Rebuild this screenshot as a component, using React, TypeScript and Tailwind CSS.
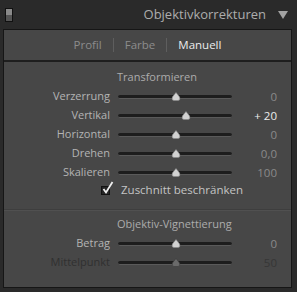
import React from "react";

const font = { fontFamily: '"Open Sans", "Noto Sans", sans-serif' };

type Row = { label: string; value: string; pos: number; bright?: boolean; dim?: boolean };

const transform: Row[] = [
  { label: "Verzerrung", value: "0", pos: 58 },
  { label: "Vertikal", value: "+ 20", pos: 68, bright: true },
  { label: "Horizontal", value: "0", pos: 58 },
  { label: "Drehen", value: "0,0", pos: 58 },
  { label: "Skalieren", value: "100", pos: 58 },
];

const vignette: Row[] = [
  { label: "Betrag", value: "0", pos: 58 },
  { label: "Mittelpunkt", value: "50", pos: 58, dim: true },
];

function Slider({ pos, dim }: { pos: number; dim?: boolean }) {
  return (
    <div className="relative w-[114px] h-[12px] flex items-center">
      <div className="w-full h-[4px] rounded-full bg-[#1d1d1d] border-b border-[#5a5a5a]" />
      <svg
        className="absolute top-[1px]"
        style={{ left: pos - 5 }}
        width="10"
        height="9"
        viewBox="0 0 10 9"
      >
        <path
          d="M5 0.5 L8.6 5 Q9.6 8.5 7 8.5 L3 8.5 Q0.4 8.5 1.4 5 Z"
          fill={dim ? "#6a6a6a" : "#d2d2d2"}
          stroke={dim ? "#3a3a3a" : "#8a8a8a"}
          strokeWidth="0.6"
        />
      </svg>
    </div>
  );
}

function SliderRow({ r }: { r: Row }) {
  const labelColor = r.dim ? "text-[#303030]" : "text-[#b4b4b4]";
  const valueColor = r.bright ? "text-[#ececec]" : r.dim ? "text-[#363636]" : "text-[#8a8a8a]";
  return (
    <div className="flex items-center h-[19px]">
      <div className={`w-[106px] text-right text-[11px] ${labelColor}`}>{r.label}</div>
      <div className="ml-[8px]">
        <Slider pos={r.pos} dim={r.dim} />
      </div>
      <div className={`w-[45px] text-right text-[11.5px] ${valueColor}`}>{r.value}</div>
    </div>
  );
}

export default function App() {
  return (
    <div className="w-[297px] h-[292px] bg-[#2a2a2a] overflow-hidden" style={font}>
      {/* Kopfzeile */}
      <div className="h-[29px] flex items-center pl-[5px] pr-[9px]">
        <div className="w-[8px] h-[14px] border border-[#111] flex flex-col">
          <div className="flex-1 bg-[#8a8a8a]" />
          <div className="flex-1 bg-[#555]" />
        </div>
        <div className="ml-auto text-[13px] text-[#adadad]">Objektivkorrekturen</div>
        <svg className="ml-[12px]" width="10" height="8" viewBox="0 0 10 8">
          <path d="M0 0 H10 L5 8 Z" fill="#a2a2a2" />
        </svg>
      </div>

      {/* Panel */}
      <div className="mx-[3px] w-[289px] h-[259px] border border-[#161616] bg-[#474747] flex flex-col">
        <div className="h-[32px] flex items-center justify-center border-b-2 border-[#1e1e1e] text-[11.5px]">
          <span className="text-[#8c8c8c]">Profil</span>
          <span className="mx-[11px] w-px h-[14px] bg-[#5e5e5e]" />
          <span className="text-[#8c8c8c]">Farbe</span>
          <span className="mx-[11px] w-px h-[14px] bg-[#5e5e5e]" />
          <span className="text-[#ececec]">Manuell</span>
        </div>

        <div className="pt-[6px]">
          <div className="pl-[113px] h-[17px] text-[11px] text-[#acacac] leading-[17px]">Transformieren</div>
          <div className="mt-[2px]">
            {transform.map((r) => (
              <SliderRow key={r.label} r={r} />
            ))}
          </div>
          <div className="flex items-center h-[19px] pl-[97px] mt-[-2px]">
            <div className="relative w-[9px] h-[9px] border border-[#111] bg-[#262626] mt-[2px]">
              <svg className="absolute left-[0px] top-[-6px]" width="12" height="14" viewBox="0 0 12 14">
                <path d="M1.5 8 L4 11.5 L10.5 1" fill="none" stroke="#eeeeee" strokeWidth="1.8" />
              </svg>
            </div>
            <span className="ml-[11px] text-[11.5px] text-[#c4c4c4]">Zuschnitt beschränken</span>
          </div>
          <div className="mt-[10px] border-t border-[#3e3e3e] border-b-[#505050] border-b" />
          <div className="pt-[4px] pl-[113px] h-[22px] text-[11px] text-[#acacac] leading-[17px]">
            Objektiv-Vignettierung
          </div>
          <div className="mt-[1px]">
            {vignette.map((r) => (
              <SliderRow key={r.label} r={r} />
            ))}
          </div>
        </div>
      </div>
    </div>
  );
}
